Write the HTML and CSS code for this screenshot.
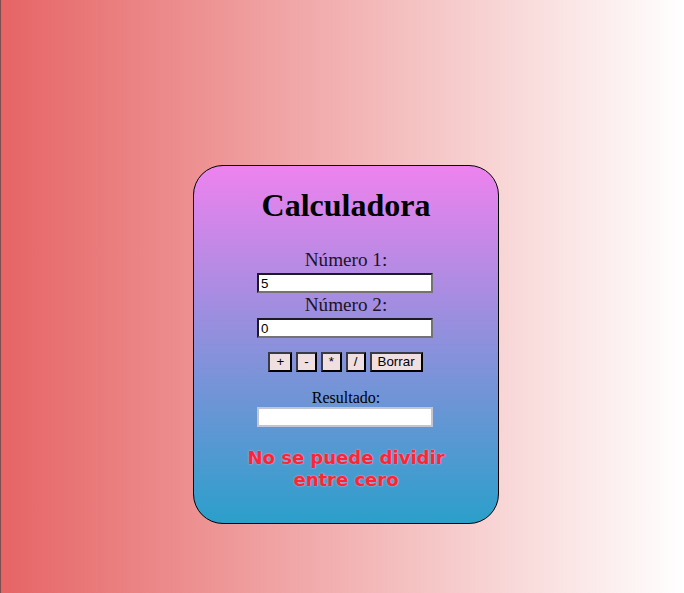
FILE: index.html
```html
<!DOCTYPE html>
<html lang="es">
<head>
<meta charset="utf-8">
<title>Calculadora</title>
<link rel="stylesheet" href="styles.css">
</head>
<body>
<main class="calc">
  <h1 class="title">Calculadora</h1>
  <label class="label" for="n1">Número 1:</label>
  <input class="field" id="n1" type="text" value="5">
  <label class="label label-2" for="n2">Número 2:</label>
  <input class="field" id="n2" type="text" value="0">
  <div class="ops">
    <button class="op">+</button>
    <button class="op">-</button>
    <button class="op">*</button>
    <button class="op">/</button>
    <button class="op">Borrar</button>
  </div>
  <label class="result-label" for="res">Resultado:</label>
  <input class="field result" id="res" type="text" readonly>
  <p class="error">No se puede dividir<br>entre cero</p>
</main>
</body>
</html>
```
FILE: styles.css
```css
html {
  min-height: 100%;
  background:
    linear-gradient(to right, #7d4f4f 0, #7d4f4f 1px, transparent 1px),
    linear-gradient(to right, #e66465, #ffffff);
}

body {
  margin: 165px 0 0 8px;
  display: flex;
  justify-content: center;
  font-family: "Liberation Serif", "Times New Roman", serif;
  color: #000;
}

.calc {
  width: 304px;
  border: 1px solid #000;
  border-radius: 30px;
  background: linear-gradient(to bottom, #ee82ee, #2b9fca);
  padding: 21px 0 32px;
  display: flex;
  flex-direction: column;
  align-items: center;
}

.title {
  margin: 0 0 26px;
  font-size: 32px;
  line-height: 36px;
  font-weight: bold;
}

.label {
  font-size: 19.2px;
  line-height: 21px;
  color: #1a1426;
}

.label-2 {
  margin-top: 1px;
}

.field {
  box-sizing: border-box;
  width: 176px;
  height: 20px;
  margin: 3px 2px 0 0;
  padding: 1px 2px;
  border: 2px solid;
  border-color: #1d1a26 #737373 #737373 #1d1a26;
  background: #fff;
  font-family: "Liberation Sans", Arial, sans-serif;
  font-size: 13.33px;
  line-height: 14px;
  color: #000;
  outline: none;
}

.ops {
  display: flex;
  gap: 4px;
  margin-top: 14px;
  padding-right: 1px;
}

.op {
  box-sizing: border-box;
  height: 20px;
  margin: 0;
  padding: 0 6px;
  border: 2px solid;
  border-color: #3a3a44 #000 #000 #3a3a44;
  background: #efdfe0;
  font-family: "Liberation Sans", Arial, sans-serif;
  font-size: 13.33px;
  line-height: 16px;
  color: #000;
}

.result-label {
  margin-top: 17px;
  font-size: 16px;
  line-height: 18px;
}

.result {
  margin-top: 0;
  border-color: #c2c6d2;
}

.error {
  margin: 20px 0 0;
  font-family: "DejaVu Sans", Verdana, sans-serif;
  font-weight: bold;
  font-size: 18px;
  line-height: 22px;
  text-align: center;
  color: #ff2433;
  text-shadow: 0 0 2px #ffb3c8;
}
```
